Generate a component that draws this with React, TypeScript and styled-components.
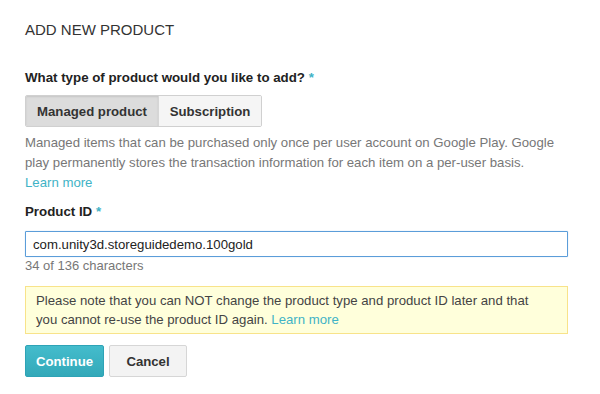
import React from 'react';
import styled, { createGlobalStyle } from 'styled-components';

const GlobalStyle = createGlobalStyle`
  body {
    margin: 0;
    background: #ffffff;
    font-family: "Liberation Sans", Arial, sans-serif;
    color: #333333;
  }
`;

const Page = styled.div`
  width: 600px;
  height: 394px;
  box-sizing: border-box;
  padding: 20px 32px 0 25px;
`;

const Title = styled.h1`
  margin: 0;
  font-size: 15px;
  font-weight: normal;
  line-height: 20px;
  color: #333333;
`;

const Label = styled.div`
  margin-top: ${props => props.$top}px;
  font-size: 13.3px;
  font-weight: bold;
  line-height: 18px;
  color: #222222;
`;

const Required = styled.span`
  color: #3fb3c6;
  font-weight: bold;
`;

const Segmented = styled.div`
  display: inline-flex;
  margin-top: 8px;
  border: 1px solid #d0d0d0;
  border-radius: 2px;
  overflow: hidden;
`;

const Segment = styled.button`
  width: ${props => props.$w}px;
  height: 30px;
  padding: 0;
  border: none;
  border-left: ${props => (props.$first ? 'none' : '1px solid #d6d6d6')};
  background: ${props => (props.$active ? '#dcdcdc' : '#f5f5f5')};
  box-shadow: ${props => (props.$active ? 'inset 0 1px 2px rgba(0,0,0,0.1)' : 'none')};
  font-family: inherit;
  font-size: 13.2px;
  font-weight: bold;
  color: #333333;
  cursor: pointer;
`;

const Help = styled.p`
  margin: 6px 0 0;
  font-size: 13.2px;
  line-height: 20px;
  color: #777777;
`;

const Link = styled.a`
  color: #3fb3c6;
  text-decoration: none;
`;

const Input = styled.input`
  display: block;
  box-sizing: border-box;
  width: 543px;
  height: 26px;
  margin-top: 10px;
  padding: 0 7px;
  border: 1px solid #5b9dd9;
  border-radius: 1px;
  box-shadow: 0 0 1px rgba(91, 157, 217, 0.6);
  font-family: inherit;
  font-size: 13.2px;
  color: #222222;
  outline: none;
`;

const Counter = styled.div`
  margin-top: 1px;
  font-size: 13px;
  line-height: 16px;
  color: #777777;
`;

const Notice = styled.div`
  box-sizing: border-box;
  width: 543px;
  margin-top: 12px;
  padding: 4px 10px;
  background: #ffffdb;
  border: 1px solid #f8e38a;
  font-size: 13.2px;
  line-height: 19px;
  color: #444444;
`;

const Actions = styled.div`
  display: flex;
  gap: 5px;
  margin-top: 11px;
`;

const Button = styled.button`
  width: ${props => props.$w}px;
  height: 32px;
  padding: 0;
  border-radius: 2px;
  font-family: inherit;
  font-size: 13.2px;
  font-weight: bold;
  cursor: pointer;
  border: 1px solid ${props => (props.$primary ? '#2ea3b6' : '#d6d6d6')};
  background: ${props =>
    props.$primary ? 'linear-gradient(#44bccc, #33a9b9)' : '#f3f3f3'};
  color: ${props => (props.$primary ? '#ffffff' : '#333333')};
`;

export default function App() {
  return (
    <Page>
      <GlobalStyle />
      <Title>ADD NEW PRODUCT</Title>
      <Label $top={29}>
        What type of product would you like to add? <Required>*</Required>
      </Label>
      <Segmented>
        <Segment $active $first $w={132}>Managed product</Segment>
        <Segment $w={103}>Subscription</Segment>
      </Segmented>
      <Help>
        Managed items that can be purchased only once per user account on Google Play. Google
        play permanently stores the transaction information for each item on a per-user basis.
        <br />
        <Link href="#">Learn more</Link>
      </Help>
      <Label $top={10}>
        Product ID <Required>*</Required>
      </Label>
      <Input defaultValue="com.unity3d.storeguidedemo.100gold" />
      <Counter>34 of 136 characters</Counter>
      <Notice>
        Please note that you can NOT change the product type and product ID later and that
        <br />
        you cannot re-use the product ID again. <Link href="#">Learn more</Link>
      </Notice>
      <Actions>
        <Button $primary $w={79}>Continue</Button>
        <Button $w={78}>Cancel</Button>
      </Actions>
    </Page>
  );
}
